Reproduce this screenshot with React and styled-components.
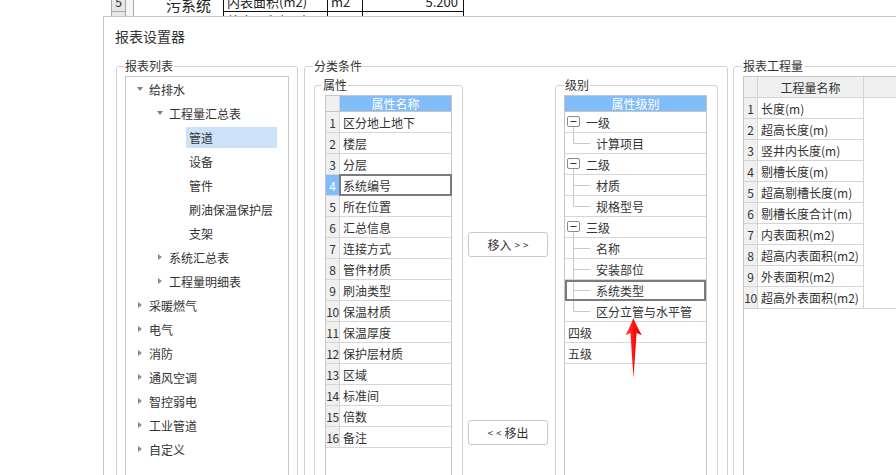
import React from 'react';
import styled, { createGlobalStyle, css } from 'styled-components';

const GlobalStyle = createGlobalStyle`
  html, body { margin: 0; padding: 0; background: #fff; }
  body {
    width: 896px; height: 475px; overflow: hidden;
    font-family: "Noto Sans CJK SC", "Noto Sans", sans-serif;
    font-size: 12px; color: #333;
  }
  #root { width: 896px; height: 475px; overflow: hidden; }
`;

const Page = styled.div`
  position: relative;
  width: 896px;
  height: 475px;
  overflow: hidden;
`;

/* ---------- background spreadsheet ---------- */
const Sheet = styled.div`
  height: 16px;
  overflow: hidden;
`;
const SheetGrid = styled.div`
  margin: -7px 0 0 111px;
  display: grid;
  grid-template-columns: 14px 8px 90px 104px 35px 102px;
  grid-template-rows: 19px 17px;
  font-size: 13px;
  line-height: 16px;
  color: #222;
`;
const SheetHead = styled.div`
  background: #e6e6e6;
  border-left: 1px solid #a8a8a8;
  border-bottom: 1px solid #a8a8a8;
  text-align: center;
  font-size: 12px;
  padding-top: 1px;
`;
const SheetStub = styled.div`
  background: #f4f4f4;
  border-left: 1px solid #a8a8a8;
  grid-row: span 2;
`;
const SheetMerged = styled.div`
  border-left: 1px solid #a8a8a8;
  grid-row: span 2;
  padding: 4px 0 0 32px;
  font-size: 15px;
`;
const SheetCell = styled.div`
  border-left: 1px solid #111;
  border-bottom: 1px solid #111;
  ${p => p.$last && css`border-right: 1px solid #111;`}
  padding: 1px ${p => (p.$right ? 5 : 3)}px 0;
  text-align: ${p => (p.$right ? 'right' : 'left')};
  white-space: nowrap;
  overflow: hidden;
`;

/* ---------- dialog ---------- */
const Dialog = styled.div`
  margin-left: 103px;
  width: 820px;
  height: 470px;
  box-sizing: border-box;
  border-left: 1px solid #c6c6c6;
  border-top: 1px solid #c6c6c6;
  background: #fff;
  padding: 9px 0 0 11px;
`;
const Title = styled.div`
  font-size: 14px;
  line-height: 20px;
  color: #333;
`;
const Groups = styled.div`
  display: flex;
  align-items: flex-start;
  margin: 20px 0 0 1px;
`;
const Group = styled.div`
  flex: none;
  box-sizing: border-box;
  width: ${p => p.$w}px;
  height: ${p => p.$h}px;
  margin-left: ${p => p.$ml || 0}px;
  border: 1px solid #d2d2d2;
  border-radius: 3px;
  padding: 0 ${p => p.$pr}px 0 ${p => p.$pl}px;
`;
const Legend = styled.div`
  display: table;
  margin: -8px 0 0 ${p => p.$x}px;
  padding: 0 1px;
  background: #fff;
  line-height: 14px;
  font-size: 12px;
  color: #333;
  white-space: nowrap;
`;

/* ---------- report list tree ---------- */
const TreePanel = styled.div`
  margin-top: 3px;
  height: 420px;
  border: 1px solid #c8c8c8;
`;
const TreeRow = styled.div`
  display: flex;
  align-items: center;
  height: 24px;
  padding-left: ${p => 11 + p.$level * 20}px;
`;
const Toggle = styled.span`
  flex: none;
  width: 12px;
  display: flex;
  align-items: center;
`;
const Caret = styled.span`
  width: 0;
  height: 0;
  ${p =>
    p.$open
      ? css`
          border-left: 3px solid transparent;
          border-right: 3px solid transparent;
          border-top: 4px solid #808080;
        `
      : css`
          margin-left: 1px;
          border-top: 3.5px solid transparent;
          border-bottom: 3.5px solid transparent;
          border-left: 4px solid #8c8c8c;
        `}
`;
const TreeLabel = styled.span`
  box-sizing: border-box;
  height: 21px;
  line-height: 21px;
  padding: 0 3px;
  margin-left: -3px;
  white-space: nowrap;
  color: #333;
  ${p =>
    p.$sel &&
    css`
      width: 91px;
      background: #cce2f8;
    `}
`;

/* ---------- classification ---------- */
const Inner = styled.div`
  display: flex;
  align-items: flex-start;
  margin-top: 12px;
`;
const Table = styled.div`
  margin-top: 3px;
  width: ${p => p.$w}px;
  height: 400px;
  box-sizing: border-box;
  border: 1px solid #c6c6c6;
`;
const BlueHeader = styled.div`
  display: flex;
  height: 16px;
  box-sizing: border-box;
  border-bottom: 1px solid #c6c6c6;
  line-height: 15px;
`;
const HeadNum = styled.div`
  flex: none;
  width: 14px;
  box-sizing: border-box;
  background: #f0f0f0;
  border-right: 1px solid #d4d4d4;
`;
const HeadBlue = styled.div`
  flex: 1;
  background: #80bcf7;
  color: #fff;
  text-align: center;
`;
const Row = styled.div`
  display: flex;
  align-items: center;
  height: 21px;
  box-sizing: border-box;
  border-bottom: 1px solid #d6d6d6;
  ${p =>
    p.$sel &&
    css`
      outline: 2px solid #7b7b7b;
      outline-offset: -2px;
    `}
`;
const NumCell = styled.div`
  flex: none;
  align-self: stretch;
  width: 14px;
  box-sizing: border-box;
  border-right: 1px solid #d4d4d4;
  background: ${p => (p.$sel ? '#80bcf7' : '#f0f0f0')};
  color: ${p => (p.$sel ? '#fff' : '#333')};
  display: flex;
  align-items: center;
  justify-content: center;
  font-size: 12px;
  letter-spacing: -0.3px;
  white-space: nowrap;
`;
const NameCell = styled.div`
  flex: 1;
  align-self: stretch;
  display: flex;
  align-items: center;
  padding-left: 3px;
  white-space: nowrap;
  ${p =>
    p.$sel &&
    css`
      outline: 2px solid #7b7b7b;
      outline-offset: -1px;
    `}
`;
const MidColumn = styled.div`
  flex: none;
  width: 92px;
  display: flex;
  flex-direction: column;
  padding: 147px 0 0 5px;
  box-sizing: border-box;
  gap: 163px;
`;
const Button = styled.div`
  width: 80px;
  height: 25px;
  box-sizing: border-box;
  border: 1px solid #c8c8c8;
  border-radius: 3px;
  background: #fff;
  display: flex;
  align-items: center;
  justify-content: center;
  color: #333;
  font-size: 12px;
`;
const Chev = styled.span`
  font-size: 10px;
  letter-spacing: 3px;
  margin: ${p => (p.$before ? '0' : '0 -3px 0 3px')};
`;
const LevelText = styled.span`
  margin-left: ${p => p.$ml}px;
  white-space: nowrap;
`;

/* ---------- report quantities ---------- */
const QtyTable = styled.div`
  margin-top: 3px;
  height: 420px;
  border-left: 1px solid #c6c6c6;
  border-top: 1px solid #c6c6c6;
`;
const QtyHeader = styled.div`
  display: flex;
  height: 21px;
  box-sizing: border-box;
  background: #f0f0f0;
  border-bottom: 1px solid #d4d4d4;
`;
const QtyHeadCell = styled.div`
  flex: ${p => (p.$grow ? 1 : 'none')};
  width: ${p => p.$w}px;
  box-sizing: border-box;
  ${p => !p.$grow && css`border-right: 1px solid #d4d4d4;`}
  display: flex;
  align-items: center;
  justify-content: center;
  color: #333;
`;
const QtyRow = styled.div`
  display: flex;
  height: 21px;
  ${p => p.$last && css`border-bottom: 1px solid #d4d4d4;`}
`;
const QtyNum = styled.div`
  flex: none;
  width: 14px;
  box-sizing: border-box;
  background: #f0f0f0;
  border-right: 1px solid #d4d4d4;
  ${p => !p.$last && css`border-bottom: 1px solid #d4d4d4;`}
  display: flex;
  align-items: center;
  justify-content: center;
  letter-spacing: -0.3px;
  white-space: nowrap;
`;
const QtyName = styled.div`
  flex: none;
  width: 106px;
  box-sizing: border-box;
  border-right: 1px solid #d4d4d4;
  ${p => !p.$last && css`border-bottom: 1px solid #d4d4d4;`}
  display: flex;
  align-items: center;
  padding-left: 3px;
  white-space: nowrap;
`;

const ArrowSvg = styled.svg`
  position: absolute;
  left: 624px;
  top: 316px;
`;

/* ---------- icons ---------- */
const ExpandBox = () => (
  <svg width="14" height="20" viewBox="0 0 14 20" style={{ flex: 'none', marginLeft: 2 }}>
    <line x1="6.5" y1="15" x2="6.5" y2="21" stroke="#c8c8c8" />
    <rect x="0.5" y="4.5" width="12" height="10" rx="1.5" fill="#fff" stroke="#8a8a8a" />
    <line x1="3.5" y1="9.5" x2="9.5" y2="9.5" stroke="#333" />
  </svg>
);

const Connector = ({ last }) => (
  <svg width="25" height="20" viewBox="0 0 25 20" style={{ flex: 'none' }}>
    <line x1="8.5" y1="-1" x2="8.5" y2={last ? 10.5 : 21} stroke="#c8c8c8" />
    <line x1="8.5" y1="10.5" x2="25" y2="10.5" stroke="#c8c8c8" />
  </svg>
);

/* ---------- data ---------- */
const tree = [
  { l: 0, t: '给排水', c: 'open' },
  { l: 1, t: '工程量汇总表', c: 'open' },
  { l: 2, t: '管道', sel: true },
  { l: 2, t: '设备' },
  { l: 2, t: '管件' },
  { l: 2, t: '刷油保温保护层' },
  { l: 2, t: '支架' },
  { l: 1, t: '系统汇总表', c: 'closed' },
  { l: 1, t: '工程量明细表', c: 'closed' },
  { l: 0, t: '采暖燃气', c: 'closed' },
  { l: 0, t: '电气', c: 'closed' },
  { l: 0, t: '消防', c: 'closed' },
  { l: 0, t: '通风空调', c: 'closed' },
  { l: 0, t: '智控弱电', c: 'closed' },
  { l: 0, t: '工业管道', c: 'closed' },
  { l: 0, t: '自定义', c: 'closed' },
];

const attrs = [
  '区分地上地下', '楼层', '分层', '系统编号', '所在位置', '汇总信息', '连接方式', '管件材质',
  '刷油类型', '保温材质', '保温厚度', '保护层材质', '区域', '标准间', '倍数', '备注',
];

const levels = [
  { t: '一级', k: 'p' },
  { t: '计算项目', k: 'c', last: true },
  { t: '二级', k: 'p' },
  { t: '材质', k: 'c' },
  { t: '规格型号', k: 'c', last: true },
  { t: '三级', k: 'p' },
  { t: '名称', k: 'c' },
  { t: '安装部位', k: 'c' },
  { t: '系统类型', k: 'c', sel: true },
  { t: '区分立管与水平管', k: 'c', last: true },
  { t: '四级', k: 'l' },
  { t: '五级', k: 'l' },
];

const qtys = [
  '长度(m)', '超高长度(m)', '竖井内长度(m)', '剔槽长度(m)', '超高剔槽长度(m)', '剔槽长度合计(m)',
  '内表面积(m2)', '超高内表面积(m2)', '外表面积(m2)', '超高外表面积(m2)',
];

export default function App() {
  return (
    <Page>
      <GlobalStyle />
      <Sheet>
        <SheetGrid>
          <SheetHead>5</SheetHead>
          <SheetStub />
          <SheetMerged>污系统</SheetMerged>
          <SheetCell>内表面积(m2)</SheetCell>
          <SheetCell>m2</SheetCell>
          <SheetCell $right $last>5.200</SheetCell>
          <SheetHead>6</SheetHead>
          <SheetCell>外表面积(m2)</SheetCell>
          <SheetCell>m2</SheetCell>
          <SheetCell $right $last>7.665</SheetCell>
        </SheetGrid>
      </Sheet>

      <Dialog>
        <Title>报表设置器</Title>
        <Groups>
          <Group $w={182} $h={430} $pl={8} $pr={8}>
            <Legend $x={-1}>报表列表</Legend>
            <TreePanel>
              {tree.map((n, i) => (
                <TreeRow key={i} $level={n.l}>
                  <Toggle>{n.c && <Caret $open={n.c === 'open'} />}</Toggle>
                  <TreeLabel $sel={n.sel}>{n.t}</TreeLabel>
                </TreeRow>
              ))}
            </TreePanel>
          </Group>

          <Group $w={424} $h={430} $pl={9} $pr={9} $ml={6}>
            <Legend $x={-1}>分类条件</Legend>
            <Inner>
              <Group $w={149} $h={420} $pl={10} $pr={10}>
                <Legend $x={-3}>属性</Legend>
                <Table $w={127}>
                  <BlueHeader>
                    <HeadNum />
                    <HeadBlue>属性名称</HeadBlue>
                  </BlueHeader>
                  {attrs.map((a, i) => (
                    <Row key={a}>
                      <NumCell $sel={i === 3}>{i + 1}</NumCell>
                      <NameCell $sel={i === 3}>{a}</NameCell>
                    </Row>
                  ))}
                </Table>
              </Group>

              <MidColumn>
                <Button>
                  移入<Chev>&gt;&gt;</Chev>
                </Button>
                <Button>
                  <Chev $before>&lt;&lt;</Chev>移出
                </Button>
              </MidColumn>

              <Group $w={163} $h={420} $pl={8} $pr={10}>
                <Legend $x={0}>级别</Legend>
                <Table $w={143}>
                  <BlueHeader>
                    <HeadBlue>属性级别</HeadBlue>
                  </BlueHeader>
                  {levels.map((lv, i) => (
                    <Row key={i} $sel={lv.sel}>
                      {lv.k === 'p' && (
                        <>
                          <ExpandBox />
                          <LevelText $ml={5}>{lv.t}</LevelText>
                        </>
                      )}
                      {lv.k === 'c' && (
                        <>
                          <Connector last={lv.last} />
                          <LevelText $ml={6}>{lv.t}</LevelText>
                        </>
                      )}
                      {lv.k === 'l' && <LevelText $ml={3}>{lv.t}</LevelText>}
                    </Row>
                  ))}
                </Table>
              </Group>
            </Inner>
          </Group>

          <Group $w={200} $h={430} $pl={9} $pr={0} $ml={5}>
            <Legend $x={-1}>报表工程量</Legend>
            <QtyTable>
              <QtyHeader>
                <QtyHeadCell $w={14} />
                <QtyHeadCell $w={106}>工程量名称</QtyHeadCell>
                <QtyHeadCell $grow />
              </QtyHeader>
              {qtys.map((q, i) => {
                const last = i === qtys.length - 1;
                return (
                  <QtyRow key={q} $last={last}>
                    <QtyNum $last={last}>{i + 1}</QtyNum>
                    <QtyName $last={last}>{q}</QtyName>
                  </QtyRow>
                );
              })}
            </QtyTable>
          </Group>
        </Groups>
      </Dialog>

      <ArrowSvg width="19" height="64" viewBox="0 0 19 64">
        <defs>
          <linearGradient id="ag" x1="0" y1="0" x2="1" y2="0">
            <stop offset="0" stopColor="#ff5050" />
            <stop offset="0.5" stopColor="#ff1010" />
            <stop offset="1" stopColor="#e00000" />
          </linearGradient>
        </defs>
        <path
          d="M9.4 2 Q12 9 17.8 19.2 L12.6 17 L9.5 62.5 L6.4 17 L1.4 19.2 Q6.8 9 9.4 2 Z"
          fill="url(#ag)"
        />
      </ArrowSvg>
    </Page>
  );
}
